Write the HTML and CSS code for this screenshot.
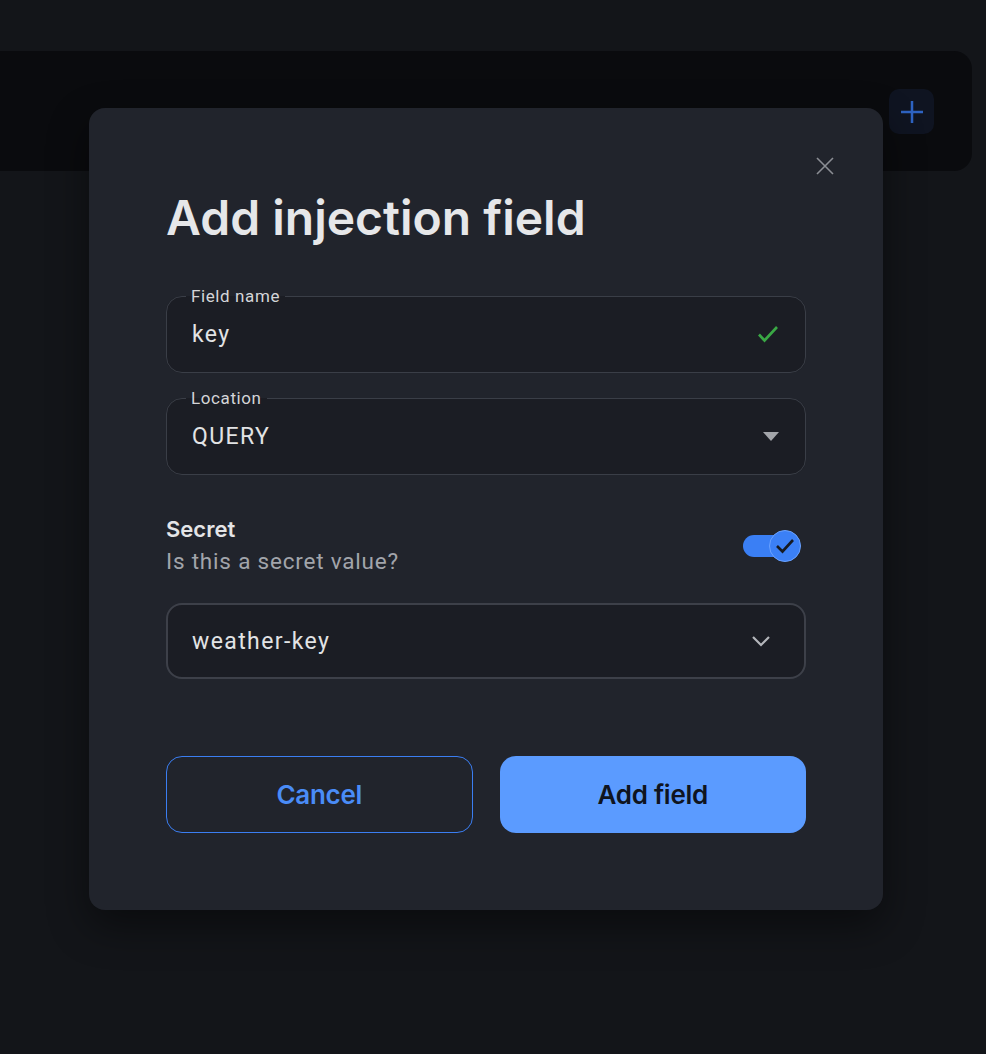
FILE: index.html
```html
<!DOCTYPE html>
<html lang="en">
<head>
<meta charset="utf-8">
<title>Add injection field</title>
<link rel="stylesheet" href="styles.css">
</head>
<body>
  <div class="bg-card">
    <button class="plus-btn" aria-label="Add">
      <svg width="24" height="24" viewBox="0 0 24 24"><path d="M12 1v22M1 12h22" stroke="#2e63c2" stroke-width="2.5" fill="none"/></svg>
    </button>
  </div>

  <div class="modal" role="dialog">
    <button class="close-btn" aria-label="Close">
      <svg width="18" height="18" viewBox="0 0 18 18"><path d="M1 1l16 16M17 1L1 17" stroke="#8b8e94" stroke-width="1.6" fill="none"/></svg>
    </button>
    <h1 class="title">Add injection field</h1>

    <fieldset class="field">
      <legend class="field-label">Field name</legend>
      <div class="field-row">
        <span class="field-value">key</span>
        <svg class="check" width="22" height="18" viewBox="0 0 22 18"><path d="M2 9.5l5.5 6L20 2" stroke="#3aa845" stroke-width="2.6" fill="none"/></svg>
      </div>
    </fieldset>

    <fieldset class="field field-loc">
      <legend class="field-label">Location</legend>
      <div class="field-row">
        <span class="field-value">QUERY</span>
        <svg class="caret" width="16" height="9" viewBox="0 0 16 9"><path d="M0 0h16L8 9z" fill="#a3a5aa"/></svg>
      </div>
    </fieldset>

    <div class="secret">
      <div class="secret-text">
        <div class="secret-title">Secret</div>
        <div class="secret-desc">Is this a secret value?</div>
      </div>
      <div class="toggle">
        <span class="toggle-track"></span>
        <span class="toggle-thumb">
          <svg width="20" height="16" viewBox="0 0 20 16"><path d="M2 8l5.5 5.5L18 2" stroke="#161a22" stroke-width="2.6" fill="none"/></svg>
        </span>
      </div>
    </div>

    <div class="select">
      <span class="select-value">weather-key</span>
      <svg width="20" height="12" viewBox="0 0 20 12"><path d="M2 2l8 8 8-8" stroke="#b4b6bb" stroke-width="2.2" fill="none"/></svg>
    </div>

    <div class="actions">
      <button class="btn btn-outline">Cancel</button>
      <button class="btn btn-primary">Add field</button>
    </div>
  </div>
</body>
</html>
```

FILE: styles.css
```css
* { box-sizing: border-box; }

html, body {
  margin: 0;
  padding: 0;
}

body {
  width: 986px;
  height: 1054px;
  background: #131519;
  font-family: "Inter", "Roboto", sans-serif;
  position: relative;
  overflow: hidden;
}

.bg-card {
  margin: 51px 14px 0 -20px;
  height: 120px;
  background: #0a0b0e;
  border-radius: 0 18px 18px 0;
  display: flex;
  justify-content: flex-end;
  padding: 38px 38px 0 0;
}

.plus-btn {
  width: 45px;
  height: 45px;
  border: 0;
  border-radius: 10px;
  background: #0f1421;
  display: flex;
  align-items: center;
  justify-content: center;
  padding: 0;
}

.modal {
  position: absolute;
  left: 89px;
  top: 108px;
  width: 794px;
  height: 802px;
  background: #21242c;
  border-radius: 16px;
  box-shadow: 0 16px 40px rgba(0, 0, 0, 0.45);
  padding: 80px 77px 0 77px;
}

.close-btn {
  position: absolute;
  right: 49px;
  top: 49px;
  width: 18px;
  height: 18px;
  padding: 0;
  border: 0;
  background: none;
  display: flex;
}

.title {
  margin: 0;
  font-family: "Inter", sans-serif;
  font-weight: 600;
  font-size: 48px;
  line-height: 60px;
  letter-spacing: 0;
  color: #e6e7e9;
}

.field {
  margin: 38px 0 0 0;
  padding: 0 24px 25px 19px;
  border: 1px solid #3a3e47;
  border-radius: 16px;
  background: #1b1d24;
  min-width: 0;
}

.field-loc {
  margin-top: 15px;
}

.field-label {
  padding: 0 5px;
  font-family: "Roboto", sans-serif;
  font-size: 17px;
  line-height: 20px;
  color: #d4d5d8;
  letter-spacing: 0.6px;
}

.field-row {
  height: 26px;
  margin-top: 15px;
  display: flex;
  align-items: center;
  justify-content: space-between;
  padding-left: 6px;
}

.field-value {
  font-family: "Roboto", sans-serif;
  font-size: 23px;
  color: #e2e3e5;
  letter-spacing: 1.4px;
}

.check { margin-right: 2px; }
.caret { margin-right: 2px; }

.secret {
  margin-top: 40px;
  display: flex;
  align-items: center;
  justify-content: space-between;
}

.secret-title {
  font-family: "Inter", sans-serif;
  font-weight: 600;
  font-size: 22px;
  line-height: 28px;
  color: #e4e5e7;
}

.secret-desc {
  margin-top: 3px;
  font-family: "Roboto", sans-serif;
  font-size: 22.5px;
  line-height: 30px;
  color: #a2a5ab;
  letter-spacing: 0.8px;
}

.toggle {
  position: relative;
  width: 58px;
  height: 32px;
  margin-right: 5px;
}

.toggle-track {
  position: absolute;
  left: 0;
  top: 5px;
  width: 48px;
  height: 22px;
  border-radius: 11px;
  background: #3a7ff5;
}

.toggle-thumb {
  position: absolute;
  right: 0;
  top: 0;
  width: 32px;
  height: 32px;
  border-radius: 50%;
  background: #3b80f6;
  border: 1px solid #6aa2ff;
  display: flex;
  align-items: center;
  justify-content: center;
}

.select {
  margin-top: 27px;
  height: 76px;
  border: 2px solid #3d4049;
  border-radius: 16px;
  background: #1b1d24;
  display: flex;
  align-items: center;
  justify-content: space-between;
  padding: 0 33px 0 24px;
}

.select-value {
  font-family: "Roboto", sans-serif;
  font-size: 23px;
  color: #e2e3e5;
  letter-spacing: 1.4px;
}

.actions {
  margin-top: 77px;
  display: grid;
  grid-template-columns: 1fr 1fr;
  gap: 27px;
}

.btn {
  height: 77px;
  border-radius: 16px;
  font-family: "Inter", sans-serif;
  font-weight: 600;
  font-size: 26px;
  letter-spacing: -0.3px;
}

.btn-outline {
  background: transparent;
  border: 1px solid #3b7ef2;
  color: #4a8cf7;
}

.btn-primary {
  background: #5b9bff;
  border: 0;
  color: #0f1420;
}
```
